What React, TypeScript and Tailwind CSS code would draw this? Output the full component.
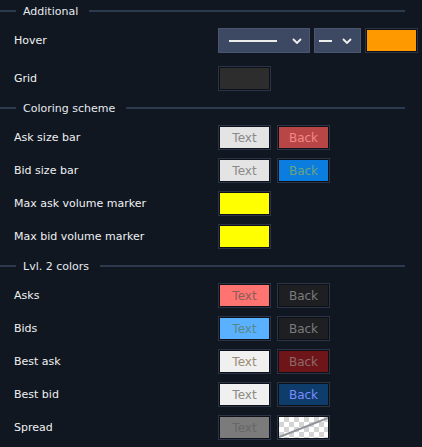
const font = { fontFamily: '"DejaVu Sans", Verdana, sans-serif' };

type Swatch = { bg: string; fg?: string; label?: string };

const Header = ({ title }: { title: string }) => (
  <div className="flex h-[22px] w-[405px] items-center">
    <div className="h-[2px] w-4 bg-[#2c3a50]" />
    <span className="pl-[7px] pr-[11px] text-[11px] leading-none text-[#e4eaf1]">{title}</span>
    <div className="h-[2px] flex-1 bg-[#2c3a50]" />
  </div>
);

const Box = ({ bg, fg, label }: Swatch) => (
  <div className="h-[25px] w-[53px] border border-[#2b3447] bg-[#0d1117] p-px">
    <div
      className={`flex h-full w-full items-center justify-center text-[12px] leading-none ${bg} ${fg ?? ""}`}
    >
      {label}
    </div>
  </div>
);

const Row = ({ label, children }: { label: string; children: React.ReactNode }) => (
  <div className="flex h-[25px] items-center">
    <span className="w-[218px] shrink-0 pl-[14px] text-[11px] leading-none text-[#eef1f4]">{label}</span>
    <div className="flex items-center gap-[6px]">{children}</div>
  </div>
);

const Chevron = () => (
  <svg width="10" height="6" viewBox="0 0 10 6" className="shrink-0">
    <path d="M1 1 L5 5 L9 1" fill="none" stroke="#f2f2f2" strokeWidth="1.8" />
  </svg>
);

const Spread = () => (
  <div className="h-[25px] w-[53px] border border-[#2b3447] bg-[#0d1117] p-px">
    <div className="relative h-full w-full bg-[conic-gradient(#d4d4d4_25%,#ffffff_0_50%,#d4d4d4_0_75%,#ffffff_0)] bg-[length:10px_10px]">
      <svg className="absolute inset-0" width="49" height="21" viewBox="0 0 49 21">
        <line x1="0" y1="20" x2="49" y2="1" stroke="#8e9299" strokeWidth="2" />
      </svg>
    </div>
  </div>
);

export default function App() {
  return (
    <div className="h-[447px] w-[422px] overflow-hidden bg-[#111720]" style={font}>
      <Header title="Additional" />
      <div className="mt-[6px] flex flex-col gap-[13px]">
        <div className="flex h-[25px] items-center">
          <span className="w-[218px] shrink-0 pl-[14px] text-[11px] leading-none text-[#eef1f4]">Hover</span>
          <div className="flex items-center gap-1">
            <div className="flex h-[25px] w-[92px] items-center border border-[#4a5570] bg-[#3d4962] pl-[10px] pr-[7px]">
              <div className="h-[2px] w-[48px] bg-[#ececec]" />
              <div className="flex-1" />
              <Chevron />
            </div>
            <div className="flex h-[25px] w-[47px] items-center border border-[#4a5570] bg-[#3d4962] pl-[4px] pr-[8px]">
              <div className="h-[2px] w-[13px] bg-[#ececec]" />
              <div className="flex-1" />
              <Chevron />
            </div>
            <Box bg="bg-[#ff9900]" />
          </div>
        </div>
        <Row label="Grid">
          <Box bg="bg-[#2d2d2d]" />
        </Row>
      </div>

      <div className="mt-[6px]">
        <Header title="Coloring scheme" />
      </div>
      <div className="mt-[6px] flex flex-col gap-2">
        <Row label="Ask size bar">
          <Box bg="bg-[#e4e4e4]" fg="text-[#8a8a8a]" label="Text" />
          <Box bg="bg-[#b94646]" fg="text-[#f08888]" label="Back" />
        </Row>
        <Row label="Bid size bar">
          <Box bg="bg-[#e4e4e4]" fg="text-[#8a8a8a]" label="Text" />
          <Box bg="bg-[#0a7ddf]" fg="text-[#6aa47e]" label="Back" />
        </Row>
        <Row label="Max ask volume marker">
          <Box bg="bg-[#ffff00]" />
        </Row>
        <Row label="Max bid volume marker">
          <Box bg="bg-[#ffff00]" />
        </Row>
      </div>

      <div className="mt-[6px]">
        <Header title="Lvl. 2 colors" />
      </div>
      <div className="mt-[6px] flex flex-col gap-2">
        <Row label="Asks">
          <Box bg="bg-[#ff7470]" fg="text-[#8e5c5a]" label="Text" />
          <Box bg="bg-[#1e1f22]" fg="text-[#7c7c7c]" label="Back" />
        </Row>
        <Row label="Bids">
          <Box bg="bg-[#5ab1ff]" fg="text-[#588a8c]" label="Text" />
          <Box bg="bg-[#1e1f22]" fg="text-[#7c7c7c]" label="Back" />
        </Row>
        <Row label="Best ask">
          <Box bg="bg-[#f0f0f0]" fg="text-[#9a8c74]" label="Text" />
          <Box bg="bg-[#6e1519]" fg="text-[#8c6a6a]" label="Back" />
        </Row>
        <Row label="Best bid">
          <Box bg="bg-[#f0f0f0]" fg="text-[#8c8c82]" label="Text" />
          <Box bg="bg-[#0e3c6b]" fg="text-[#7c8cff]" label="Back" />
        </Row>
        <Row label="Spread">
          <Box bg="bg-[#7b7b7b]" fg="text-[#666666]" label="Text" />
          <Spread />
        </Row>
      </div>
    </div>
  );
}
